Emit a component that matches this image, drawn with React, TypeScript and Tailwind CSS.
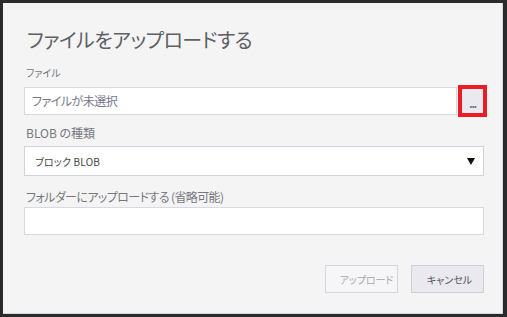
import React from "react";

const jp = { fontFamily: '"Noto Sans CJK JP", "Noto Sans", sans-serif', fontFeatureSettings: '"palt"' } as React.CSSProperties;

export default function App() {
  return (
    <div className="w-[507px] h-[317px] bg-[#2b2b2b] pt-[3px] pl-[3px] overflow-hidden" style={jp}>
      <div className="w-[500px] h-[311px] bg-[#f4f4f4] border-r border-b border-[#d6d6e0] pl-[21px] flex flex-col">
        <div className="mt-[26px] h-[21px] leading-[21px] text-[20px] tracking-[-0.5px] text-[#5f5f66] ml-[3px] whitespace-nowrap">
          ファイルをアップロードする
        </div>
        <div className="mt-[17px] h-[12px] leading-[12px] text-[10px] text-[#77777f] ml-[2px]">ファイル</div>
        <div className="mt-[8px] flex items-center h-[28px]">
          <div className="w-[433px] h-[28px] bg-white border border-[#d8d8e4] flex items-center pl-[7px] text-[12px] text-[#75758a] tracking-[-0.5px]">
            ファイルが未選択
          </div>
          <div className="ml-px w-[29px] h-[32px] border-[4px] border-[#ec1c24] bg-[#e9e9ef] flex items-end justify-center pb-[4px]">
            <span className="text-[10px] leading-[10px] text-[#6a6a7a] font-bold tracking-[-1px]">...</span>
          </div>
        </div>
        <div className="mt-[11px] h-[14px] leading-[14px] text-[12px] text-[#77777f] ml-[2px]">BLOB の種類</div>
        <div className="mt-[6px] w-[460px] h-[30px] bg-white border border-[#d2d2de] flex items-center pl-[10px] pr-[8px]">
          <span className="text-[10px] text-[#444] tracking-[0.2px]">ブロック BLOB</span>
          <svg className="ml-auto" width="8" height="7" viewBox="0 0 8 7">
            <polygon points="0,0 8,0 4,7" fill="#111" />
          </svg>
        </div>
        <div className="mt-[14px] h-[14px] leading-[14px] text-[12px] tracking-[-0.6px] text-[#77777f] ml-[2px] whitespace-nowrap">
          フォルダーにアップロードする (省略可能)
        </div>
        <div className="mt-[3px] w-[460px] h-[28px] bg-white border border-[#d8d8e4]"></div>
        <div className="mt-[30px] w-[460px] flex justify-end gap-[13px]">
          <div className="w-[73px] h-[28px] bg-[#f6f6f8] border border-[#d4d4de] flex items-center justify-center text-[10px] text-[#a8a8b0] pl-[10px]">
            アップロード
          </div>
          <div className="w-[73px] h-[28px] bg-[#e9e9ef] border border-[#cfcfda] flex items-center justify-center text-[10px] text-[#55555f] pl-[4px]">
            キャンセル
          </div>
        </div>
      </div>
    </div>
  );
}
